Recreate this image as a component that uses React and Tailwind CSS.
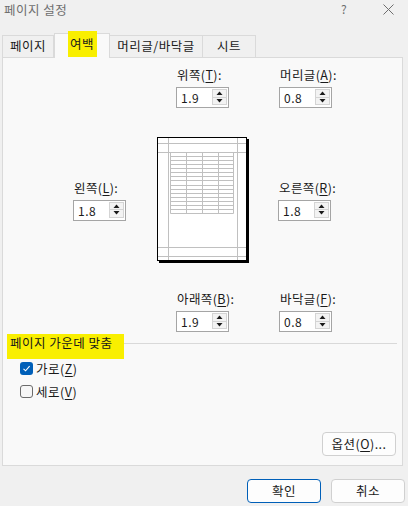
import React from "react";

const U = ({ c }) => <span className="underline underline-offset-[2px] decoration-[1px]">{c}</span>;

function Tri({ down }) {
  return (
    <svg width="7" height="4" viewBox="0 0 7 4" className="block">
      {down ? <polygon points="0.5,0 6.5,0 3.5,3.5" fill="#1a1a1a" /> : <polygon points="0.5,4 6.5,4 3.5,0.5" fill="#1a1a1a" />}
    </svg>
  );
}

function Spin({ pre, u, value }) {
  return (
    <div className="flex flex-col w-[53px]">
      <div className="h-[16px] leading-[16px] text-[12.5px] tracking-[0.4px] whitespace-nowrap pl-[1px] text-[#1a1a1a]">
        {pre}(<U c={u} />):
      </div>
      <div className="mt-[4px] h-[21px] border border-[#a5a5a5] bg-white flex">
        <div className="flex-1 pl-[4px] leading-[19px] text-[12px] text-[#1a1a1a]">{value}</div>
        <div className="w-[15px] mt-[1px] mb-[2px] mr-[1px] flex flex-col border border-[#d4d4d4]">
          <div className="flex-1 flex items-center justify-center bg-[#f3f3f3] border-b border-[#d4d4d4]">
            <Tri />
          </div>
          <div className="flex-1 flex items-center justify-center bg-[#f3f3f3]">
            <Tri down />
          </div>
        </div>
      </div>
    </div>
  );
}

function Preview() {
  const cols = [13, 29, 45, 61, 76];
  const rows = [];
  for (let i = 0; i <= 15; i++) rows.push(15 + Math.round((i * 61) / 15));
  return (
    <svg width="92" height="126" viewBox="0 0 92 126" className="block">
      <rect x="2" y="2" width="90" height="124" fill="#000" />
      <rect x="0.5" y="0.5" width="89" height="123" fill="#fff" stroke="#000" strokeWidth="1" />
      <g stroke="#c0c0c0" strokeWidth="1">
        <line x1="11.5" y1="1" x2="11.5" y2="123" />
        <line x1="80.5" y1="1" x2="80.5" y2="123" />
        <line x1="1" y1="6.5" x2="89" y2="6.5" />
        <line x1="1" y1="15.5" x2="89" y2="15.5" />
        <line x1="1" y1="110.5" x2="89" y2="110.5" />
        <line x1="1" y1="119.5" x2="89" y2="119.5" />
        {cols.map((c) => (
          <line key={"c" + c} x1={c + 0.5} y1="15.5" x2={c + 0.5} y2="76.5" />
        ))}
        {rows.map((r) => (
          <line key={"r" + r} x1="13.5" y1={r + 0.5} x2="76.5" y2={r + 0.5} />
        ))}
      </g>
    </svg>
  );
}

export default function App() {
  return (
    <div className="w-[408px] h-[506px] bg-[#f0f0f0] overflow-hidden font-['Noto_Sans_CJK_KR',sans-serif] text-[#1a1a1a] text-[12.5px] tracking-[0.5px]">
      {/* title bar */}
      <div className="h-[33px] flex items-start relative">
        <span className="ml-[4px] mt-[2px] leading-[16px] text-[#6e6e6e]">페이지 설정</span>
        <span className="absolute left-[341px] top-[1px] text-[12px] leading-[16px] text-[#6e6e6e]">?</span>
        <svg className="absolute left-[383px] top-[4px]" width="11" height="11" viewBox="0 0 11 11">
          <path d="M0.5 0.5 L10.5 10.5 M10.5 0.5 L0.5 10.5" stroke="#6e6e6e" strokeWidth="1" />
        </svg>
      </div>
      {/* tabs */}
      <div className="h-[24px] flex items-end pl-[2px] relative z-10">
        <div className="w-[52px] h-[22px] border border-b-0 border-[#dadada] bg-[#f0f0f0] flex items-center justify-center">
          페이지
        </div>
        <div className="w-[56px] h-[25px] -mb-px border border-b-0 border-[#dadada] bg-[#f9f9f9] flex items-start justify-center">
          <span className="-mt-[3px] w-[29px] h-[26px] bg-[#f9ef00] flex items-center justify-center pt-[1px] whitespace-nowrap">
            여백
          </span>
        </div>
        <div className="w-[93px] h-[22px] border border-l-0 border-b-0 border-[#dadada] bg-[#f0f0f0] flex items-center justify-center whitespace-nowrap">
          머리글/바닥글
        </div>
        <div className="w-[53px] h-[22px] border border-l-0 border-b-0 border-[#dadada] bg-[#f0f0f0] flex items-center justify-center">
          시트
        </div>
      </div>
      {/* panel */}
      <div className="ml-[2px] w-[401px] h-[409px] border border-[#dadada] bg-[#f9f9f9] flex flex-col">
        <div className="flex pt-[9px] pl-[173px] gap-[50px]">
          <Spin pre="위쪽" u="T" value="1.9" />
          <Spin pre="머리글" u="A" value="0.8" />
        </div>
        <div className="flex items-center mt-[29px] pl-[70px]">
          <Spin pre="왼쪽" u="L" value="1.8" />
          <div className="ml-[31px]">
            <Preview />
          </div>
          <div className="ml-[29px]">
            <Spin pre="오른쪽" u="R" value="1.8" />
          </div>
        </div>
        <div className="flex mt-[28px] pl-[173px] gap-[50px]">
          <Spin pre="아래쪽" u="B" value="1.9" />
          <Spin pre="바닥글" u="F" value="0.8" />
        </div>
        <div className="flex items-start mt-[2px] pl-[4px] pr-[5px]">
          <span className="w-[117px] h-[25px] bg-[#f9ef00] pl-[3px] pt-[1px] leading-[16px] whitespace-nowrap">
            페이지 가운데 맞춤
          </span>
          <div className="flex-1 h-px mt-[9px] bg-[#d9d9d9]" />
        </div>
        <div className="flex flex-col gap-[10px] mt-[3px] pl-[17px]">
          <div className="flex items-center h-[13px] gap-[3px]">
            <div className="w-[13px] h-[13px] rounded-[3px] bg-[#005fb8] flex items-center justify-center">
              <svg width="9" height="9" viewBox="0 0 9 9">
                <path d="M1.5 4.8 L3.6 6.8 L7.6 2.2" stroke="#fff" strokeWidth="1.1" fill="none" />
              </svg>
            </div>
            <span className="leading-[16px]">
              가로(<U c="Z" />)
            </span>
          </div>
          <div className="flex items-center h-[13px] gap-[3px]">
            <div className="w-[13px] h-[13px] rounded-[3px] border border-[#6b6b6b] bg-[#f6f6f6]" />
            <span className="leading-[16px]">
              세로(<U c="V" />)
            </span>
          </div>
        </div>
        <div className="flex justify-end mt-[34px] pr-[6px]">
          <div className="w-[74px] h-[24px] rounded-[4px] border border-[#d0d0d0] bg-[#fdfdfd] flex items-center justify-center">
            옵션(<U c="O" />)...
          </div>
        </div>
      </div>
      {/* bottom buttons */}
      <div className="flex justify-end gap-[10px] mt-[13px] pr-[3px]">
        <div className="w-[74px] h-[24px] rounded-[4px] border border-[#005fb8] bg-[#fdfdfd] flex items-center justify-center">
          확인
        </div>
        <div className="w-[74px] h-[24px] rounded-[4px] border border-[#d0d0d0] bg-[#fdfdfd] flex items-center justify-center">
          취소
        </div>
      </div>
    </div>
  );
}
